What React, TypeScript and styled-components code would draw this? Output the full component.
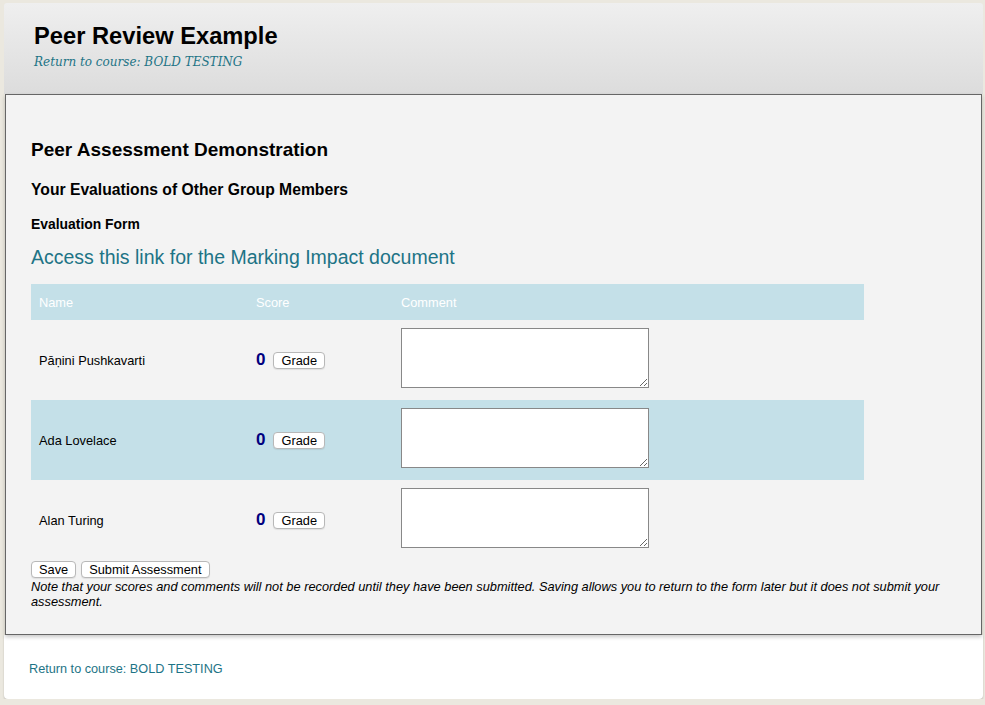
import React from "react";
import styled, { createGlobalStyle } from "styled-components";

const Global = createGlobalStyle`
  html, body { margin: 0; padding: 0; }
  body {
    background: #ebe8df;
    font-family: "Liberation Sans", Arial, sans-serif;
    color: #000;
  }
`;

const Page = styled.div`
  margin: 3px 2px 0 4px;
  width: 979px;
`;

const Header = styled.header`
  height: 91px;
  box-sizing: border-box;
  padding: 19px 30px 0;
  background: linear-gradient(#efefef, #dcdcdc);
  border-radius: 3px 3px 0 0;
`;

const Title = styled.h1`
  margin: 0;
  font-size: 23.7px;
  line-height: 28px;
  font-weight: bold;
`;

const SerifLink = styled.a`
  display: block;
  margin-top: 4px;
  font-family: "DejaVu Serif", Georgia, serif;
  font-style: italic;
  font-size: 12px;
  line-height: 16px;
  color: #1d7486;
  text-decoration: none;
`;

const Panel = styled.main`
  position: relative;
  z-index: 1;
  margin: 0 1px;
  background: #f3f3f3;
  border: 1px solid #666;
  padding: 44px 25px 25px 25px;
  box-shadow: 0 2px 4px rgba(0, 0, 0, 0.22);
`;

const H2 = styled.h2`
  margin: 0;
  font-size: 19px;
  line-height: 22px;
  font-weight: bold;
`;

const H3 = styled.h3`
  margin: 20px 0 0;
  font-size: 15.7px;
  line-height: 18px;
  font-weight: bold;
`;

const H4 = styled.h4`
  margin: 17px 0 0;
  font-size: 13.9px;
  line-height: 16px;
  font-weight: bold;
`;

const DocLink = styled.a`
  display: block;
  margin-top: 14px;
  font-size: 19.5px;
  line-height: 22px;
  color: #1d7486;
  text-decoration: none;
`;

const Table = styled.table`
  margin-top: 16px;
  width: 833px;
  border-collapse: collapse;
  font-size: 12.8px;
`;

const Th = styled.th<{ $w?: number }>`
  height: 36px;
  padding: 0 8px;
  text-align: left;
  font-weight: normal;
  color: #fff;
  background: #c4e0e8;
  width: ${(p) => (p.$w ? `${p.$w}px` : "auto")};
  box-sizing: border-box;
`;

const Tr = styled.tr<{ $alt?: boolean }>`
  height: 80px;
  background: ${(p) => (p.$alt ? "#c4e0e8" : "transparent")};
`;

const Td = styled.td<{ $top?: boolean }>`
  padding: ${(p) => (p.$top ? "8px 8px 0" : "0 8px")};
  vertical-align: ${(p) => (p.$top ? "top" : "middle")};
`;

const ScoreCell = styled.div`
  display: flex;
  align-items: center;
  gap: 8px;
`;

const Score = styled.span`
  font-size: 17px;
  font-weight: bold;
  color: #00007f;
  line-height: 20px;
`;

const Button = styled.button`
  height: 17px;
  padding: 0 7px;
  background: #fff;
  border: 1px solid #b8b8b8;
  border-radius: 4px;
  font-family: "Liberation Sans", Arial, sans-serif;
  font-size: 12.8px;
  line-height: 15px;
  color: #000;
  box-shadow: 0 1px 1px rgba(0, 0, 0, 0.08);
`;

const Comment = styled.textarea`
  display: block;
  width: 248px;
  height: 60px;
  margin: 0;
  box-sizing: border-box;
  border: 1px solid #888;
  background: #fff;
`;

const Actions = styled.div`
  display: flex;
  gap: 5px;
  margin-top: 1px;
`;

const Note = styled.p`
  margin: 1px 0 0;
  font-size: 12.8px;
  line-height: 15px;
  font-style: italic;
`;

const Footer = styled.footer`
  height: 64px;
  box-sizing: border-box;
  padding: 24px 25px 0;
  background: #fff;
  border-radius: 0 0 4px 4px;
  box-shadow: 0 1px 2px rgba(0, 0, 0, 0.2);
`;

const FooterLink = styled.a`
  font-size: 12.7px;
  line-height: 16px;
  color: #1d7486;
  text-decoration: none;
`;

const people = [
  { name: "Pāṇini Pushkavarti", alt: false },
  { name: "Ada Lovelace", alt: true },
  { name: "Alan Turing", alt: false },
];

export default function App() {
  return (
    <Page>
      <Global />
      <Header>
        <Title>Peer Review Example</Title>
        <SerifLink href="#">Return to course: BOLD TESTING</SerifLink>
      </Header>
      <Panel>
        <H2>Peer Assessment Demonstration</H2>
        <H3>Your Evaluations of Other Group Members</H3>
        <H4>Evaluation Form</H4>
        <DocLink href="#">Access this link for the Marking Impact document</DocLink>
        <Table>
          <thead>
            <tr>
              <Th $w={217}>Name</Th>
              <Th $w={145}>Score</Th>
              <Th>Comment</Th>
            </tr>
          </thead>
          <tbody>
            {people.map((p) => (
              <Tr key={p.name} $alt={p.alt}>
                <Td>{p.name}</Td>
                <Td>
                  <ScoreCell>
                    <Score>0</Score>
                    <Button>Grade</Button>
                  </ScoreCell>
                </Td>
                <Td $top>
                  <Comment />
                </Td>
              </Tr>
            ))}
          </tbody>
        </Table>
        <Actions>
          <Button>Save</Button>
          <Button>Submit Assessment</Button>
        </Actions>
        <Note>
          Note that your scores and comments will not be recorded until they have been submitted.
          Saving allows you to return to the form later but it does not submit your assessment.
        </Note>
      </Panel>
      <Footer>
        <FooterLink href="#">Return to course: BOLD TESTING</FooterLink>
      </Footer>
    </Page>
  );
}
